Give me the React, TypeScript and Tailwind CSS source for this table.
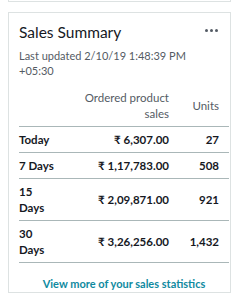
type Row = { label: string; sales: string; units: string };

const rows: Row[] = [
  { label: 'Today', sales: '₹ 6,307.00', units: '27' },
  { label: '7 Days', sales: '₹ 1,17,783.00', units: '508' },
  { label: '15 Days', sales: '₹ 2,09,871.00', units: '921' },
  { label: '30 Days', sales: '₹ 3,26,256.00', units: '1,432' },
];

function App() {
  return (
    <div
      className="w-[243px] h-[300px] bg-white overflow-hidden pl-2"
      style={{ fontFamily: 'Lato, "Noto Sans", sans-serif' }}
    >
      {/* tail of the card above */}
      <div className="w-[223px] h-[2px] border-x border-b border-[#dde2e2]" />

      <div className="w-[223px] mt-[10px] h-[281px] border border-[#dde2e2] pl-[10px] pr-px pt-[8px]">
        {/* Header */}
        <div className="flex items-start justify-between pr-[10px]">
          <h2 className="text-[15.5px] leading-[22px] text-[#16191f]">Sales Summary</h2>
          <div className="flex gap-[2px] pt-[8px] pr-[1px]">
            <span className="w-[3px] h-[3px] rounded-full bg-[#545b64]" />
            <span className="w-[3px] h-[3px] rounded-full bg-[#545b64]" />
            <span className="w-[3px] h-[3px] rounded-full bg-[#545b64]" />
          </div>
        </div>
        <p className="mt-[5px] text-[11px] leading-[15px] text-[#545b64] pr-[30px]">
          Last updated 2/10/19 1:48:39 PM +05:30
        </p>

        {/* Sales table */}
        <table className="mt-[12px] w-full border-collapse text-[11.5px]">
          <thead>
            <tr className="border-b border-[#aab7b8]">
              <th className="w-[40px]" />
              <th className="pr-[10px] pb-[4px] text-right font-normal leading-[16px] text-[#545b64]">
                Ordered product
                <br />
                sales
              </th>
              <th className="w-[50px] pr-[10px] pb-[4px] text-right font-normal leading-[16px] text-[#545b64]">
                Units
              </th>
            </tr>
          </thead>
          <tbody>
            {rows.map((r) => (
              <tr key={r.label} className="border-b border-[#aab7b8]">
                <td className="py-[4.5px] pr-1 align-middle leading-[16px] font-bold text-[#16191f]">{r.label}</td>
                <td className="py-[4.5px] pr-[10px] text-right align-middle leading-[16px] font-bold text-[#16191f] whitespace-nowrap">
                  {r.sales}
                </td>
                <td className="py-[4.5px] pr-[10px] text-right align-middle leading-[16px] font-bold text-[#16191f]">
                  {r.units}
                </td>
              </tr>
            ))}
          </tbody>
        </table>

        <div className="mt-[7px] text-center">
          <a className="text-[11px] font-bold leading-[16px] text-[#0f8aa0]">View more of your sales statistics</a>
        </div>
      </div>
    </div>
  );
}

export default App;
